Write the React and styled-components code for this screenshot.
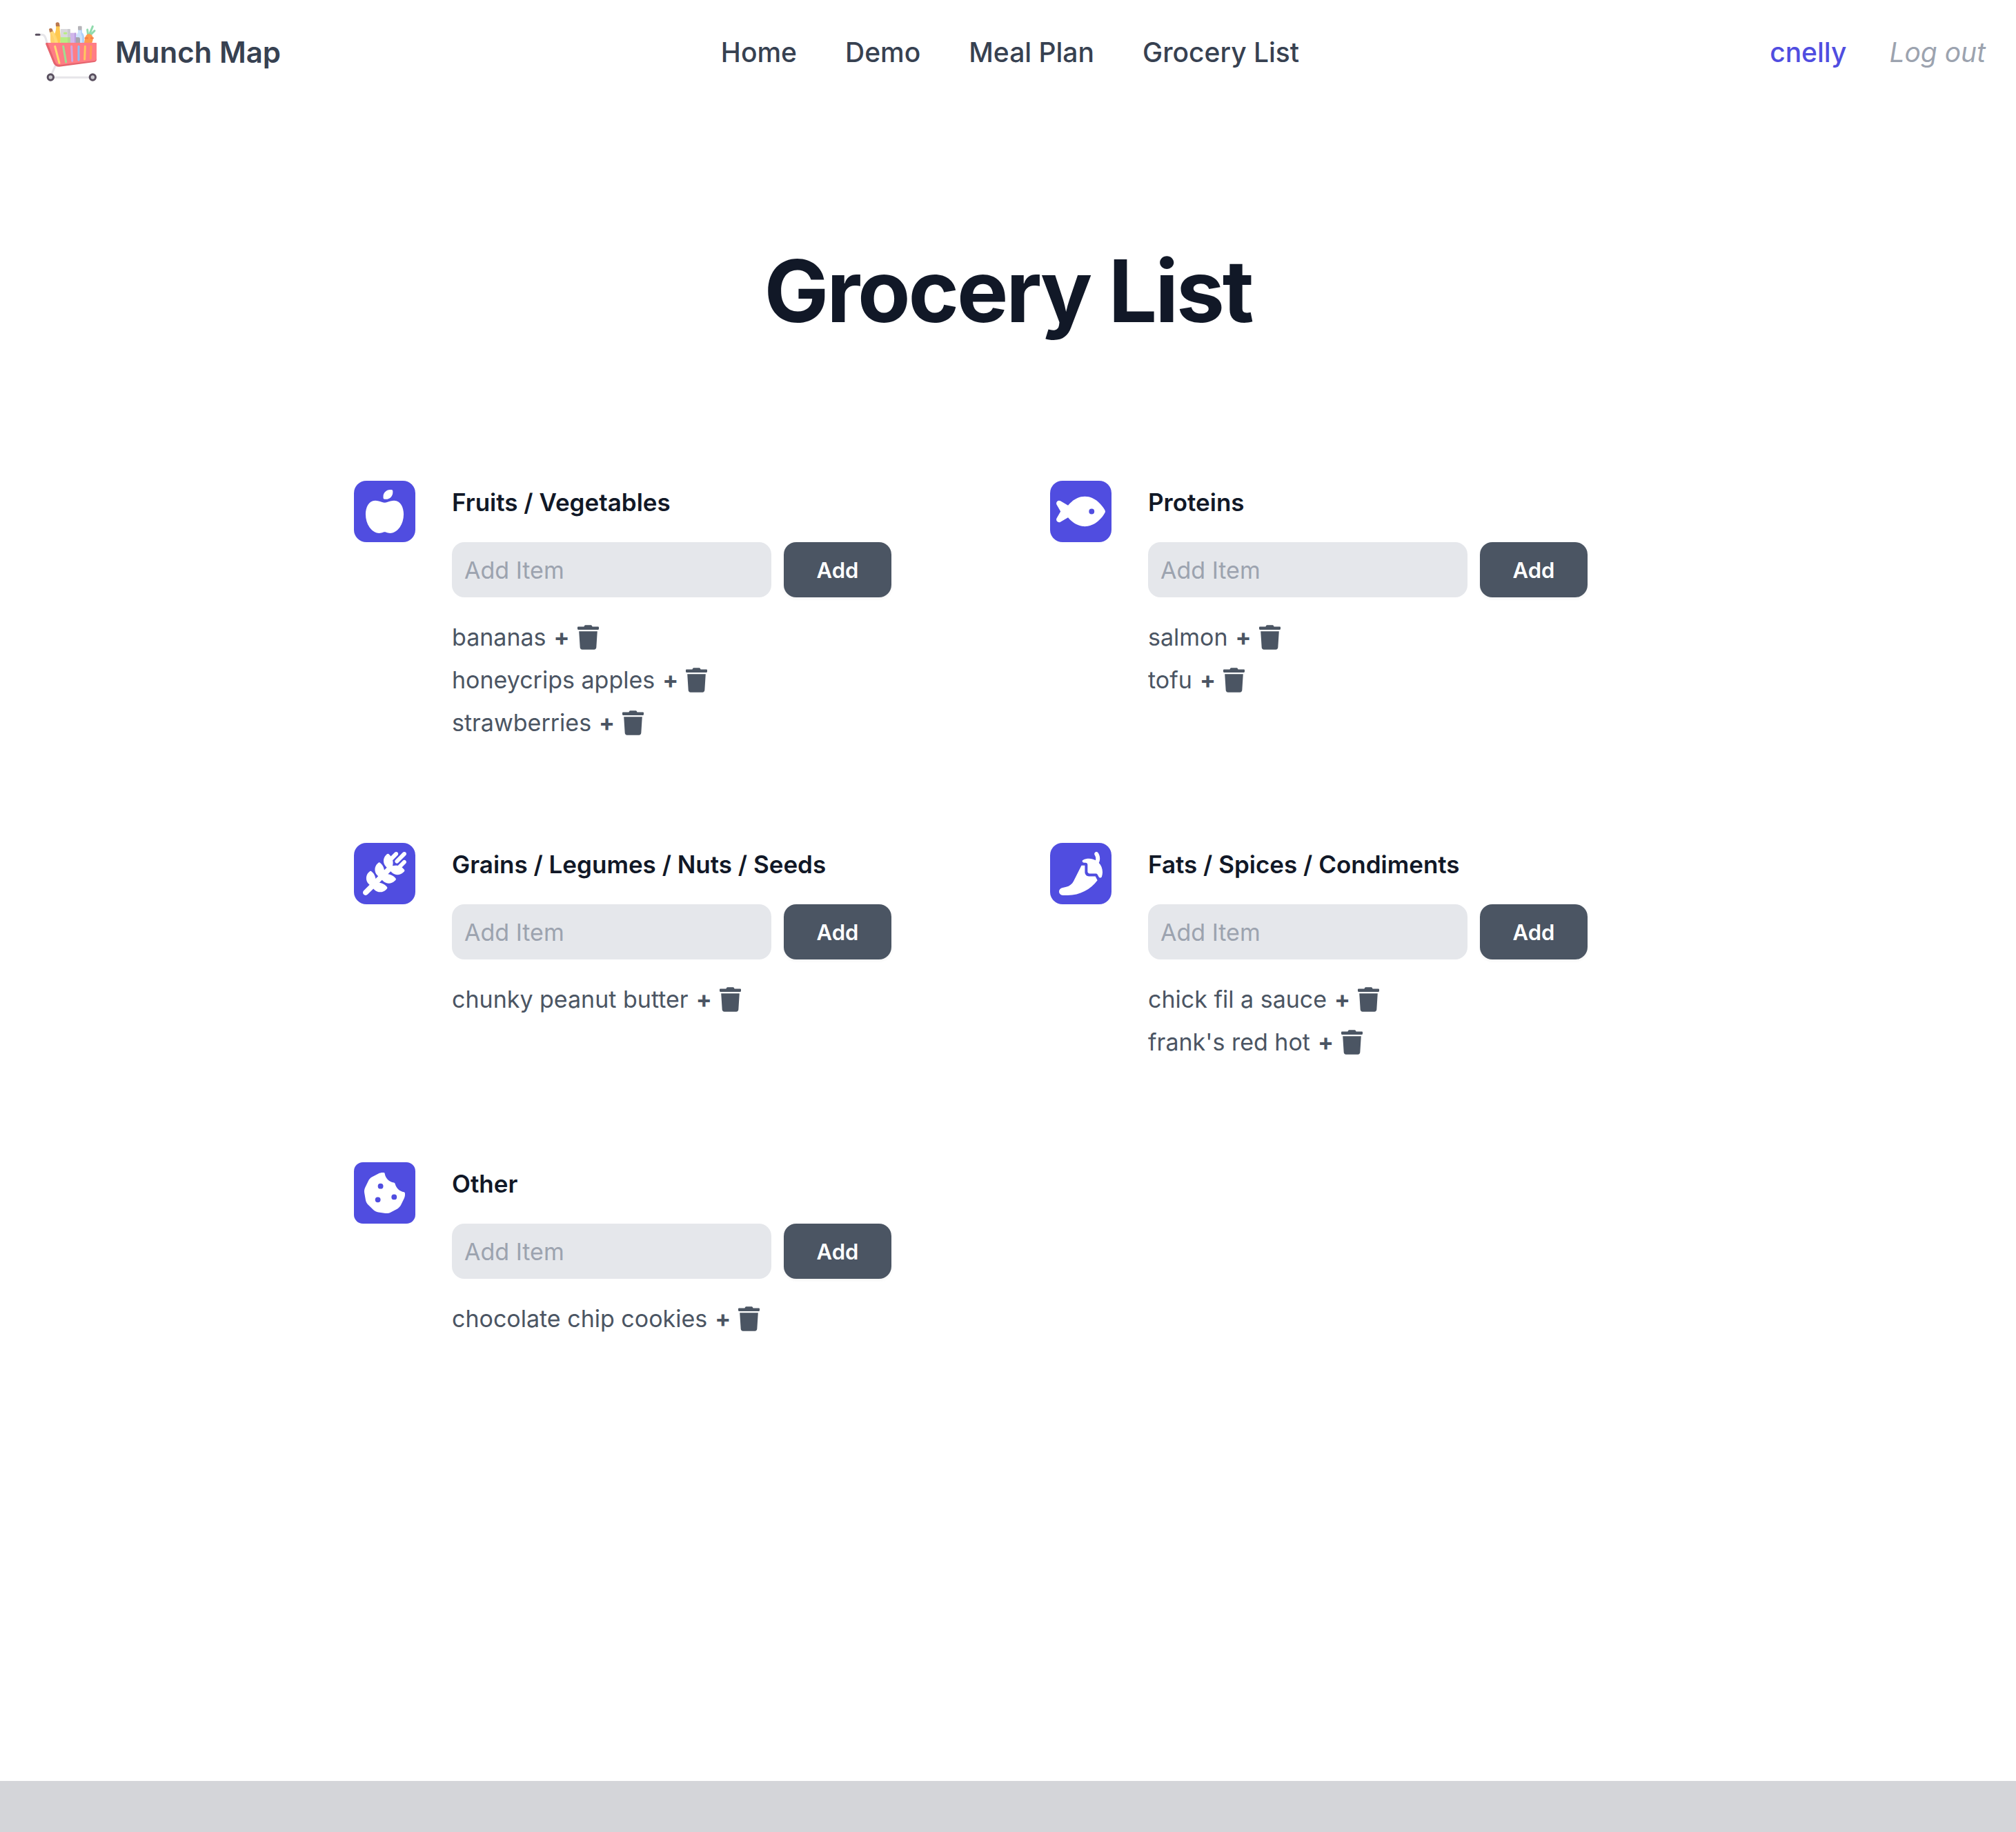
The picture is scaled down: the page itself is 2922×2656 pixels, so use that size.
import React, { useState } from "react";
import styled, { createGlobalStyle } from "styled-components";
import {
  FaAppleWhole,
  FaFish,
  FaWheatAwn,
  FaPepperHot,
  FaCookieBite,
} from "react-icons/fa6";
import { FaTrash } from "react-icons/fa";

const GlobalStyle = createGlobalStyle`
  *, *::before, *::after { box-sizing: border-box; }
  html, body { margin: 0; background: #ffffff; }
  body {
    font-family: Inter, "Liberation Sans", sans-serif;
    color: #111827;
    -webkit-font-smoothing: antialiased;
  }
  button, input { font: inherit; }
`;

const Page = styled.div`
  display: flex;
  flex-direction: column;
  min-height: 100vh;
`;

const Header = styled.header`
  display: flex;
  align-items: center;
  padding: 32px 44px 32px 50px;
`;

const Side = styled.div`
  display: flex;
  flex: 1;
  align-items: center;
  justify-content: ${(p) => (p.$end ? "flex-end" : "flex-start")};
  gap: 62px;
`;

const Brand = styled.a`
  display: flex;
  align-items: center;
  gap: 24px;
  color: #374151;
  font-size: 42px;
  font-weight: 600;
  line-height: 62px;
  text-decoration: none;
`;

const Nav = styled.nav`
  display: flex;
  gap: 70px;
`;

const NavLink = styled.a`
  color: ${(p) => (p.$accent ? "#504de0" : "#374151")};
  font-size: 39px;
  font-weight: 500;
  line-height: 62px;
  text-decoration: none;
`;

const LogOut = styled.button`
  padding: 0;
  border: 0;
  background: none;
  color: #9ca3af;
  font-size: 39px;
  font-style: italic;
  line-height: 62px;
  cursor: pointer;
`;

const Main = styled.main`
  flex: 1;
  padding: 204px 48px 142px;
`;

const Title = styled.h1`
  margin: 0 0 209px;
  font-size: 125px;
  font-weight: 700;
  letter-spacing: -0.025em;
  line-height: 132px;
  text-align: center;
`;

const Sections = styled.div`
  display: grid;
  grid-template-columns: repeat(2, minmax(0, 1fr));
  gap: 143px 122px;
  max-width: 1896px;
  margin: 0 auto;
`;

const Section = styled.section`
  display: grid;
  grid-template-columns: 89px minmax(0, 1fr);
  align-items: start;
  column-gap: 53px;
`;

const IconTile = styled.div`
  display: flex;
  align-items: center;
  justify-content: center;
  height: 89px;
  border-radius: ${(p) => p.$radius}px;
  background: #504de0;
  color: #ffffff;

  svg {
    width: 71px;
    height: 63px;
  }
`;

const SectionBody = styled.div`
  display: flex;
  flex-direction: column;
  gap: 27px;
`;

const SectionTitle = styled.h2`
  margin: 0;
  font-size: 35px;
  font-weight: 600;
  line-height: 62px;
`;

const AddForm = styled.form`
  display: flex;
  gap: 18px;
`;

const ItemInput = styled.input`
  width: 463px;
  min-width: 0;
  height: 80px;
  padding: 0 18px;
  border: 0;
  border-radius: 18px;
  background: #e5e7eb;
  color: #111827;
  font-size: 34px;

  &::placeholder {
    color: #9ca3af;
    opacity: 1;
  }
`;

const AddButton = styled.button`
  width: 156px;
  height: 80px;
  padding: 0;
  border: 0;
  border-radius: 18px;
  background: #4b5563;
  box-shadow: 0 2px 4px rgba(0, 0, 0, 0.05);
  color: #ffffff;
  font-size: 31px;
  font-weight: 600;
  cursor: pointer;
`;

const Items = styled.ul`
  margin: 0;
  padding: 0;
  list-style: none;
`;

const Item = styled.li`
  display: flex;
  align-items: center;
  gap: 11px;
  height: 62px;
  color: #4b5563;
  font-size: 34px;
  line-height: 62px;
`;

const ItemButton = styled.button`
  display: flex;
  align-items: center;
  padding: 0;
  border: 0;
  background: none;
  color: inherit;
  font-weight: 700;
  line-height: 62px;
  cursor: pointer;

  svg {
    width: 31px;
    height: 36px;
  }
`;

const Footer = styled.footer`
  height: 74px;
  background: #d4d5d9;
`;

function CartLogo() {
  return (
    <svg width="93" height="88" viewBox="18 24 279 264" aria-hidden="true">
      {/* frame and handle */}
      <path d="M40 79H50C64 79 66 92 73 116M109 213L92 252M100 265H258" fill="none" stroke="#e6e5e9" strokeWidth="9" />
      <path d="M25 79H39" stroke="#594f5f" strokeWidth="9" strokeLinecap="round" />
      {/* bananas */}
      <path d="M83 63L98 61C108 76 118 94 121 116H89C85 96 90 80 83 63Z" fill="#ffd06a" />
      <path d="M112 40H128C126 64 136 90 131 116H121L103 82C110 70 112 55 112 40Z" fill="#ffc84f" />
      <path d="M88 68C99 82 105 98 106 116H121C118 94 108 76 98 61Z" fill="#ffe082" opacity=".6" />
      <path d="M81 54Q88 48 95 53L98 64L84 69Z" fill="#b97850" />
      <path d="M110 29Q118 21 126 29L128 43H111Z" fill="#b97850" />
      {/* carton */}
      <rect x="131" y="54" width="43" height="62" rx="3" fill="#d9d9dc" />
      <path d="M131 90H174V116H131Z" fill="#b8ee83" />
      <path d="M162 54H171Q174 54 174 58V116H162Z" fill="#a5a5aa" opacity=".25" />
      <rect x="144" y="68" width="16" height="9" rx="4" fill="#b8ee83" />
      {/* box, bottle and can */}
      <path d="M174 71H199V116H174Z" fill="#d0b6ea" />
      <path d="M192 71H199V116H192Z" fill="#b99ce0" />
      <path d="M207 57H224V69Q234 78 234 92V116H198V90Q199 78 207 69Z" fill="#cde2fc" />
      <path d="M220 57H224V69Q234 78 234 92V116H225V86Q220 76 220 69Z" fill="#afd0fa" />
      <rect x="207" y="41" width="17" height="18" rx="4" fill="#b5b4b9" />
      <path d="M198 90H209Q216 90 216 97V116H198Z" fill="#a5a4ab" />
      {/* carrot */}
      <path d="M251 82L248 57M256 80L271 43M259 82L279 62" stroke="#90dbad" strokeWidth="9" strokeLinecap="round" fill="none" />
      <path d="M234 116C236 96 239 76 254 76C271 76 278 94 267 116Z" fill="#ff9a4d" />
      <path d="M238 94H249M264 94H273" stroke="#f47b45" strokeWidth="6" strokeLinecap="round" />
      {/* basket */}
      <path d="M69 114H284Q288 114 288 119V186Q288 196 278 198L126 218Q109 219 101 204L67 121Q65 114 69 114Z" fill="#e5646e" />
      <path d="M75 114H284Q288 114 288 119V181Q288 190 279 192L130 210Q115 211 108 197Z" fill="#ff7d85" />
      <g fill="none" strokeWidth="9" strokeLinecap="round">
        <path d="M107 130L126 202" stroke="#ffd96f" />
        <path d="M143 130L155 198" stroke="#a0df90" />
        <path d="M179 130L182 193" stroke="#d0a5e0" />
        <path d="M210 130V189" stroke="#8fbdf5" />
        <path d="M238 130L236 186" stroke="#ffc85e" />
        <path d="M264 130L262 182" stroke="#ff9d50" />
      </g>
      {/* wheels */}
      <circle cx="88" cy="264" r="12.500" fill="#c9c8cd" stroke="#594f5f" strokeWidth="9" />
      <circle cx="271" cy="264" r="12.500" fill="#c9c8cd" stroke="#594f5f" strokeWidth="9" />
    </svg>
  );
}

const groups = [
  {
    id: "fruits",
    title: "Fruits / Vegetables",
    Icon: FaAppleWhole,
    radius: 18,
    items: ["bananas", "honeycrips apples", "strawberries"],
  },
  { id: "proteins", title: "Proteins", Icon: FaFish, radius: 18, items: ["salmon", "tofu"] },
  {
    id: "grains",
    title: "Grains / Legumes / Nuts / Seeds",
    Icon: FaWheatAwn,
    radius: 18,
    items: ["chunky peanut butter"],
  },
  {
    id: "fats",
    title: "Fats / Spices / Condiments",
    Icon: FaPepperHot,
    radius: 18,
    items: ["chick fil a sauce", "frank's red hot"],
  },
  { id: "other", title: "Other", Icon: FaCookieBite, radius: 13, items: ["chocolate chip cookies"] },
];

function GrocerySection({ id, title, Icon, radius, items }) {
  const [draft, setDraft] = useState("");
  return (
    <Section aria-labelledby={`${id}-title`}>
      <IconTile $radius={radius}>
        <Icon aria-hidden="true" />
      </IconTile>
      <SectionBody>
        <SectionTitle id={`${id}-title`}>{title}</SectionTitle>
        <AddForm onSubmit={(e) => e.preventDefault()}>
          <ItemInput
            type="text"
            placeholder="Add Item"
            aria-labelledby={`${id}-title`}
            value={draft}
            onChange={(e) => setDraft(e.target.value)}
          />
          <AddButton type="submit">Add</AddButton>
        </AddForm>
        <Items>
          {items.map((item) => (
            <Item key={item}>
              <span>{item}</span>
              <ItemButton type="button">+</ItemButton>
              <ItemButton type="button" aria-label={`Remove ${item}`}>
                <FaTrash aria-hidden="true" />
              </ItemButton>
            </Item>
          ))}
        </Items>
      </SectionBody>
    </Section>
  );
}

export default function App() {
  return (
    <Page>
      <GlobalStyle />
      <Header>
        <Side>
          <Brand href="#home">
            <CartLogo />
            Munch Map
          </Brand>
        </Side>
        <Nav aria-label="Main">
          <NavLink href="#home">Home</NavLink>
          <NavLink href="#demo">Demo</NavLink>
          <NavLink href="#meal-plan">Meal Plan</NavLink>
          <NavLink href="#grocery-list">Grocery List</NavLink>
        </Nav>
        <Side $end>
          <NavLink href="#profile" $accent>cnelly</NavLink>
          <LogOut type="button">Log out</LogOut>
        </Side>
      </Header>
      <Main>
        <Title>Grocery List</Title>
        <Sections>
          {groups.map((group) => (
            <GrocerySection key={group.id} {...group} />
          ))}
        </Sections>
      </Main>
      <Footer />
    </Page>
  );
}
